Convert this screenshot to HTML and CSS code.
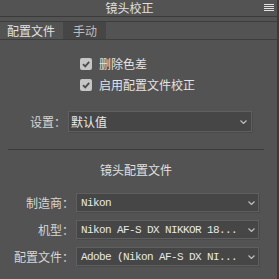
FILE: index.html
```html
<!DOCTYPE html>
<html lang="zh">

<head>
    <meta charset="UTF-8">
    <meta name="viewport" content="width=device-width, initial-scale=1.0">
    <title>镜头校正</title>
    <link rel="stylesheet" href="styles.css">
</head>

<body>
    <div class="panel">
        <div class="panel__head">
            <div class="panel__title">镜头校正</div>
            <svg class="panel__menu" width="10" height="8" viewBox="0 0 10 8">
                <rect x="0" y="0" width="10" height="1" />
                <rect x="0" y="2" width="10" height="1" />
                <rect x="0" y="4" width="10" height="1" />
                <rect x="0" y="6" width="10" height="1" />
            </svg>
        </div>

        <div class="tabs">
            <div class="tabs__item tabs__item--active">配置文件</div>
            <div class="tabs__item">手动</div>
        </div>

        <div class="checks">
            <label class="check">
                <span class="check__box">
                    <svg width="12" height="12" viewBox="0 0 12 12">
                        <path d="M3 6.2 L5.2 8.4 L9.2 3.8" />
                    </svg>
                </span>
                <span class="check__name">删除色差</span>
            </label>
            <label class="check">
                <span class="check__box">
                    <svg width="12" height="12" viewBox="0 0 12 12">
                        <path d="M3 6.2 L5.2 8.4 L9.2 3.8" />
                    </svg>
                </span>
                <span class="check__name">启用配置文件校正</span>
            </label>
        </div>

        <div class="field field--setting">
            <span class="field__label">设置：</span>
            <div class="select select--tall">
                <span class="select__value select__value--cjk">默认值</span>
                <svg class="select__arrow" width="7" height="4" viewBox="0 0 7 4">
                    <polyline points="0.5,0.5 3.5,3.5 6.5,0.5" />
                </svg>
            </div>
        </div>

        <div class="divider"></div>

        <div class="section-title">镜头配置文件</div>

        <div class="fields">
            <div class="field">
                <span class="field__label">制造商：</span>
                <div class="select">
                    <span class="select__value">Nikon</span>
                    <svg class="select__arrow" width="7" height="4" viewBox="0 0 7 4">
                        <polyline points="0.5,0.5 3.5,3.5 6.5,0.5" />
                    </svg>
                </div>
            </div>
            <div class="field">
                <span class="field__label">机型：</span>
                <div class="select">
                    <span class="select__value">Nikon AF-S DX NIKKOR 18...</span>
                    <svg class="select__arrow" width="7" height="4" viewBox="0 0 7 4">
                        <polyline points="0.5,0.5 3.5,3.5 6.5,0.5" />
                    </svg>
                </div>
            </div>
            <div class="field">
                <span class="field__label">配置文件：</span>
                <div class="select">
                    <span class="select__value">Adobe (Nikon AF-S DX NI...</span>
                    <svg class="select__arrow" width="7" height="4" viewBox="0 0 7 4">
                        <polyline points="0.5,0.5 3.5,3.5 6.5,0.5" />
                    </svg>
                </div>
            </div>
        </div>
    </div>
</body>

</html>
```

FILE: styles.css
```css
body {
    margin: 0;
    background: #535353;
}

/* panel */
.panel {
    width: 277px;
    height: 279px;
    border-right: 2px solid #3a3a3a;
    background: #535353;
    color: #d9d9d9;
    font-family: "Noto Sans CJK SC", sans-serif;
    font-size: 12px;
    overflow: hidden;
}

.panel__head {
    display: flex;
    align-items: center;
    height: 16px;
    border-bottom: 1px solid #3b3b3b;
}

.panel__title {
    flex: 1;
    text-align: center;
    line-height: 16px;
    color: #e0e0e0;
}

.panel__menu {
    display: block;
    margin: 0 3px 0 5px;
    fill: #e2e2e2;
}

/* tabs */
.tabs {
    display: flex;
    margin-top: 4px;
    border-top: 1px solid #3d3d3d;
    border-bottom: 1px solid #3d3d3d;
}

.tabs__item {
    height: 17px;
    line-height: 17px;
    padding: 0 9px 0 10px;
    background: #464646;
    color: #bcbcbc;
}

.tabs__item--active {
    padding: 0 8px 0 7px;
    background: #535353;
    color: #e2e2e2;
}

/* checkboxes */
.checks {
    padding: 14px 0 0 80px;
}

.check {
    display: flex;
    align-items: flex-start;
    height: 21px;
}

.check__box {
    display: block;
    width: 12px;
    height: 12px;
    margin-top: 4px;
    border-radius: 2px;
    background: #c6c6c6;
}

.check__box svg {
    display: block;
    fill: none;
    stroke: #4c4c4c;
    stroke-width: 1.8;
}

.check__name {
    margin-left: 7px;
    line-height: 19px;
    color: #e4e4e4;
}

/* fields */
.field {
    display: flex;
    align-items: center;
}

.field__label {
    width: 74px;
    text-align: right;
    color: #d6d6d6;
}

.field--setting {
    margin-top: 15px;
}

.field--setting .field__label {
    width: 66px;
}

.fields {
    display: flex;
    flex-direction: column;
    gap: 8px;
    margin-top: 15px;
}

.select {
    display: flex;
    align-items: center;
    box-sizing: border-box;
    width: 183px;
    height: 19px;
    margin-left: 2px;
    padding: 0 3px 0 4px;
    border: 1px solid #5f5f5f;
    background: #464646;
    box-shadow: 1px 1px 0 #4a4a4a;
}

.select--tall {
    width: 184px;
    height: 21px;
    padding: 0 4px 0 2px;
}

.select__value {
    flex: 1;
    overflow: hidden;
    white-space: nowrap;
    font-family: "Liberation Mono", "Noto Sans CJK SC", monospace;
    font-size: 11px;
    letter-spacing: -0.6px;
    color: #e8e8e8;
}

.select__value--cjk {
    font-family: "Noto Sans CJK SC", sans-serif;
    font-size: 12px;
    letter-spacing: 0;
}

.select__arrow {
    display: block;
    fill: none;
    stroke: #bdbdbd;
    stroke-width: 1.2;
}

/* section */
.divider {
    width: 256px;
    height: 1px;
    margin: 17px 0 0 8px;
    background: #3c3c3c;
}

.section-title {
    margin-top: 12px;
    padding-right: 5px;
    line-height: 16px;
    text-align: center;
    color: #e0e0e0;
}
```
